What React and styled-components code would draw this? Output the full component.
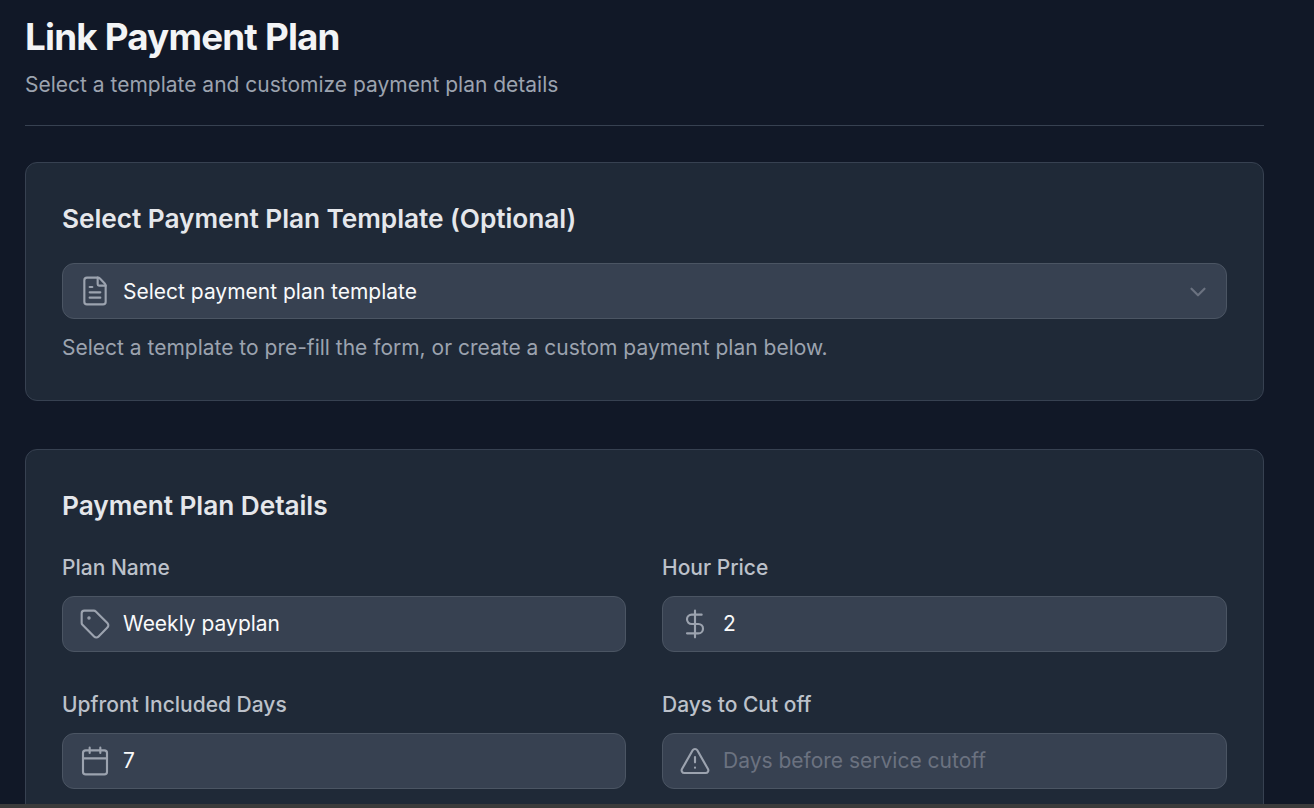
import styled, { createGlobalStyle } from "styled-components";
import { ChevronDown, FileText, Tag, DollarSign, Calendar, TriangleAlert } from "lucide-react";

const GlobalStyle = createGlobalStyle`
    * { box-sizing : border-box; }
    html, body { margin : 0; height : 100%; background : #111827; overflow : hidden; }
    body { font-family : Inter, "Liberation Sans", sans-serif; }
`;

const Screen = styled.div`
    display : flex; flex-direction : column;
    height : 808px;
`;
const Page = styled.main`
    flex : 1; min-height : 0; overflow : hidden;
    padding : 12px 50px 0 25px;
`;
const BottomEdge = styled.div`
    height : 4px; background : #3b3b3b;
`;
const Header = styled.header`
    height : 114px;
    border-bottom : 1px solid #374151;
    margin-bottom : 36px;
`;
const Title = styled.h1`
    margin : 0;
    font-size : 36.75px; line-height : 50px; font-weight : 700;
    letter-spacing : -0.8px;
    color : #f3f4f6;
`;
const Subtitle = styled.p`
    margin : 0; padding-top : 8px;
    font-size : 21px; line-height : 30px;
    color : #9ca3af;
`;
const Card = styled.section`
    background : #1f2937;
    border : 1px solid #374151;
    border-radius : 12px;
    padding : 36px;
    margin-bottom : 48px;
`;
const CardTitle = styled.h2`
    margin : 0 0 24px;
    font-size : 26.25px; line-height : 40px; font-weight : 600;
    letter-spacing : -0.05px;
    color : #e5e7eb;
`;
const FieldGrid = styled.div`
    display : grid;
    grid-template-columns : 564px 1fr;
    gap : 39px 36px;
    margin-top : 28px;
`;
const Field = styled.div`
    display : flex; flex-direction : column;
`;
const Label = styled.label`
    font-size : 21px; line-height : 28px; font-weight : 500;
    color : #bcc1ca;
    margin-bottom : 14px;
`;
const InputBox = styled.div`
    display : flex; align-items : center;
    height : 56px;
    padding : 0 16px;
    background : #374151;
    border : 1px solid #4b5563;
    border-radius : 12px;
    color : #9ca3af;
`;
const IconSlot = styled.span`
    display : flex; justify-content : center; align-items : center;
    width : 32px; margin-right : 12px; flex : none;
`;
const TextInput = styled.input`
    flex : 1; min-width : 0;
    background : none; border : 0; outline : 0; padding : 0 0 1px;
    font : inherit; font-size : 21px;
    color : #f9fafb;
    &::placeholder { color : #6b7280; opacity : 1; }
`;
const SelectValue = styled.span`
    flex : 1;
    font-size : 21px;
    color : #f9fafb;
`;
const Chevron = styled(ChevronDown)`
    margin : 2px -1px 0 0;
    color : #6b7280;
`;
const Hint = styled.p`
    margin : 13px 0 0;
    font-size : 21px; line-height : 32px;
    color : #9ca3af;
`;

const fields = [
    { label : "Plan Name", icon : Tag, value : "Weekly payplan" },
    { label : "Hour Price", icon : DollarSign, value : "2" },
    { label : "Upfront Included Days", icon : Calendar, value : "7" },
    { label : "Days to Cut off", icon : TriangleAlert, placeholder : "Days before service cutoff" },
];

const App = () => {
    return (<Screen>
        <GlobalStyle />
        <Page>
            <Header>
                <Title>Link Payment Plan</Title>
                <Subtitle>Select a template and customize payment plan details</Subtitle>
            </Header>
            <Card>
                <CardTitle>Select Payment Plan Template (Optional)</CardTitle>
                <InputBox>
                    <IconSlot><FileText size={32} strokeWidth={1.6} /></IconSlot>
                    <SelectValue>Select payment plan template</SelectValue>
                    <Chevron size={26} />
                </InputBox>
                <Hint>Select a template to pre-fill the form, or create a custom payment plan below.</Hint>
            </Card>
            <Card>
                <CardTitle>Payment Plan Details</CardTitle>
                <FieldGrid>
                    {fields.map(({ label, icon : Icon, value, placeholder }) => (
                        <Field key={label}>
                            <Label>{label}</Label>
                            <InputBox>
                                <IconSlot><Icon size={32} strokeWidth={1.6} /></IconSlot>
                                <TextInput defaultValue={value} placeholder={placeholder} />
                            </InputBox>
                        </Field>
                    ))}
                </FieldGrid>
            </Card>
        </Page>
        <BottomEdge />
    </Screen>)
}
export default App
